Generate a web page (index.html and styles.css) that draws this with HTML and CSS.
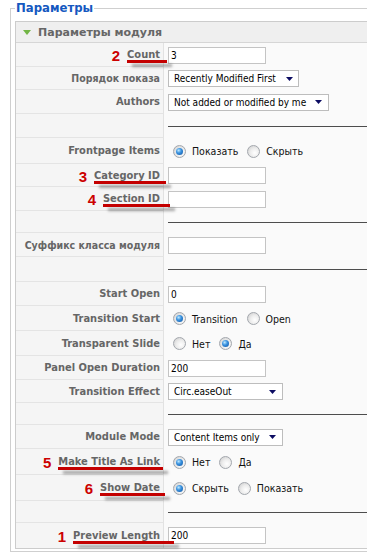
FILE: index.html
```html
<!DOCTYPE html>
<html lang="ru">
<head>
<meta charset="utf-8">
<title>Параметры</title>
<link rel="stylesheet" href="styles.css">
</head>
<body>
<fieldset class="adminform">
  <legend>Параметры</legend>
  <div class="panel">
    <h3 class="panel-title"><span class="tri"></span>Параметры модуля</h3>
    <div class="rows">
      <div class="row h24">
        <div class="key"><span class="num">2</span><span class="mark ext7">Count</span></div>
        <div class="val"><input class="text" type="text" value="3"></div>
      </div>
      <div class="row h23">
        <div class="key cy">Порядок показа</div>
        <div class="val"><div class="select w131"><span>Recently Modified First</span><svg class="arr" width="7" height="4" viewBox="0 0 7 4"><path d="M0 0H7L3.5 4Z"/></svg></div></div>
      </div>
      <div class="row h24">
        <div class="key">Authors</div>
        <div class="val"><div class="select w161"><span>Not added or modified by me</span><svg class="arr" width="7" height="4" viewBox="0 0 7 4"><path d="M0 0H7L3.5 4Z"/></svg></div></div>
      </div>
      <div class="row h24">
        <div class="key"></div>
        <div class="val"><span class="hr"></span></div>
      </div>
      <div class="row h26">
        <div class="key">Frontpage Items</div>
        <div class="val"><span class="radio on"></span><span class="rl">Показать</span><span class="radio"></span><span class="rl">Скрыть</span></div>
      </div>
      <div class="row h23">
        <div class="key"><span class="num">3</span><span class="mark ext6">Category ID</span></div>
        <div class="val"><input class="text" type="text" value=""></div>
      </div>
      <div class="row h24">
        <div class="key"><span class="num">4</span><span class="mark ext10">Section ID</span></div>
        <div class="val"><input class="text" type="text" value=""></div>
      </div>
      <div class="row h22">
        <div class="key"></div>
        <div class="val"><span class="hr"></span></div>
      </div>
      <div class="row h24">
        <div class="key cy">Суффикс класса модуля</div>
        <div class="val"><input class="text" type="text" value=""></div>
      </div>
      <div class="row h25">
        <div class="key"></div>
        <div class="val"><span class="hr"></span></div>
      </div>
      <div class="row h24">
        <div class="key">Start Open</div>
        <div class="val"><input class="text" type="text" value="0"></div>
      </div>
      <div class="row h25">
        <div class="key">Transition Start</div>
        <div class="val"><span class="radio on"></span><span class="rl">Transition</span><span class="radio"></span><span class="rl">Open</span></div>
      </div>
      <div class="row h25">
        <div class="key">Transparent Slide</div>
        <div class="val"><span class="radio"></span><span class="rl">Нет</span><span class="radio on"></span><span class="rl">Да</span></div>
      </div>
      <div class="row h24">
        <div class="key">Panel Open Duration</div>
        <div class="val"><input class="text" type="text" value="200"></div>
      </div>
      <div class="row h23">
        <div class="key">Transition Effect</div>
        <div class="val"><div class="select w115"><span>Circ.easeOut</span><svg class="arr" width="7" height="4" viewBox="0 0 7 4"><path d="M0 0H7L3.5 4Z"/></svg></div></div>
      </div>
      <div class="row h22">
        <div class="key"></div>
        <div class="val"><span class="hr"></span></div>
      </div>
      <div class="row h24">
        <div class="key">Module Mode</div>
        <div class="val"><div class="select w115"><span>Content Items only</span><svg class="arr" width="7" height="4" viewBox="0 0 7 4"><path d="M0 0H7L3.5 4Z"/></svg></div></div>
      </div>
      <div class="row h26">
        <div class="key"><span class="num">5</span><span class="mark ext3">Make Title As Link</span></div>
        <div class="val"><span class="radio on"></span><span class="rl">Нет</span><span class="radio"></span><span class="rl">Да</span></div>
      </div>
      <div class="row h26">
        <div class="key"><span class="num">6</span><span class="mark ext5">Show Date</span></div>
        <div class="val"><span class="radio on"></span><span class="rl">Скрыть</span><span class="radio"></span><span class="rl">Показать</span></div>
      </div>
      <div class="row h22">
        <div class="key"></div>
        <div class="val"><span class="hr"></span></div>
      </div>
      <div class="row h25 last">
        <div class="key"><span class="num">1</span><span class="mark ext14">Preview Length</span></div>
        <div class="val"><input class="text" type="text" value="200"></div>
      </div>
    </div>
  </div>
</fieldset>
</body>
</html>
```
FILE: styles.css
```css
html, body {
  margin: 0;
  padding: 0;
  overflow: hidden;
  background: #fff;
}
body {
  font-family: "DejaVu Sans Condensed", "DejaVu Sans", sans-serif;
  color: #333;
}
.adminform {
  margin: 0 0 0 10px;
  padding: 5px 0 2px 4px;
  border: 1px solid #cfcfcf;
  border-right: none;
  min-width: 0;
}
.adminform legend {
  padding: 0 1px;
  line-height: 16px;
  font-family: "DejaVu Sans Condensed", "DejaVu Sans", sans-serif;
  font-weight: bold;
  font-size: 13px;
  color: #1558c0;
}
.panel {
  border: 1px solid #cccccc;
  border-right: none;
  background: #fafafa;
}
.panel-title {
  margin: 0;
  height: 20px;
  box-sizing: content-box;
  background: #efefef;
  border-bottom: 1px solid #d6d6d6;
  display: flex;
  align-items: center;
  padding-left: 7px;
  font-family: "DejaVu Sans", sans-serif;
  font-weight: bold;
  font-size: 11px;
  color: #666;
}
.tri {
  width: 0;
  height: 0;
  border-left: 4px solid transparent;
  border-right: 4px solid transparent;
  border-top: 5px solid #72b545;
  margin-right: 7px;
}
.row {
  display: grid;
  grid-template-columns: 148px 1fr;
  box-sizing: border-box;
}
.h22 { height: 22px; }
.h23 { height: 23px; }
.h24 { height: 24px; }
.h25 { height: 25px; }
.h26 { height: 26px; }
.key {
  box-sizing: border-box;
  display: flex;
  align-items: center;
  justify-content: flex-end;
  padding-right: 3px;
  background: #f5f5f5;
  border-right: 1px solid #e2e2e2;
  border-bottom: 1px solid #e4e4e4;
  font-weight: bold;
  font-size: 11px;
  color: #666;
  white-space: nowrap;
}
.key.cy { font-size: 10.5px; }
.last .key { border-bottom: none; }
.val {
  display: flex;
  align-items: center;
  padding-left: 4px;
  font-size: 10px;
  color: #111;
  white-space: nowrap;
}
.text {
  box-sizing: border-box;
  width: 98px;
  height: 17px;
  margin: 0;
  padding: 0 2px;
  border: 1px solid #c4c4c4;
  background: #fff;
  font-family: "DejaVu Sans Condensed", "DejaVu Sans", sans-serif;
  font-size: 10px;
  color: #000;
  outline: none;
}
.select {
  box-sizing: border-box;
  height: 17px;
  border: 1px solid #bdbdbd;
  background: #fff;
  display: flex;
  align-items: center;
  justify-content: space-between;
  padding: 0 5px 0 5px;
  font-size: 10px;
  color: #000;
}
.w131 { width: 131px; }
.w161 { width: 161px; padding-right: 6px; }
.w115 { width: 115px; padding-right: 6px; }
.arr { fill: #0c0c62; flex: none; }
.hr {
  flex: 1;
  height: 0;
  border-top: 1px solid #4d4d4d;
}
.radio {
  box-sizing: border-box;
  width: 13px;
  height: 13px;
  border-radius: 50%;
  border: 1px solid #a3a7ad;
  background: radial-gradient(circle at 62% 62%, #ffffff 0, #ededed 45%, #c9c9c9 100%);
  display: inline-flex;
  align-items: center;
  justify-content: center;
  margin-left: 5px;
  margin-right: 6px;
  flex: none;
}
.rl + .radio { margin-left: 9px; }
.radio.on::after {
  content: "";
  width: 7px;
  height: 7px;
  border-radius: 50%;
  background: radial-gradient(circle at 38% 35%, #bfeaff 0, #3b93e0 40%, #0b4f9e 100%);
}
.rl {
  font-size: 10.5px;
  color: #111;
}
.num {
  font-family: "Liberation Sans", Arial, sans-serif;
  font-weight: bold;
  font-size: 15px;
  color: #cc0000;
  margin-right: 7px;
  position: relative;
  top: 1px;
}
.mark {
  position: relative;
}
.mark::after {
  content: "";
  position: absolute;
  left: 0;
  top: calc(100% - 1px);
  height: 3px;
  background: #c40000;
  box-shadow: 5px 4px 3px rgba(0, 0, 0, 0.35);
  z-index: 2;
}
.ext3::after { right: -3px; }
.ext5::after { right: -5px; }
.ext6::after { right: -6px; }
.ext7::after { right: -7px; }
.ext10::after { right: -10px; }
.ext14::after { right: -14px; }
```
